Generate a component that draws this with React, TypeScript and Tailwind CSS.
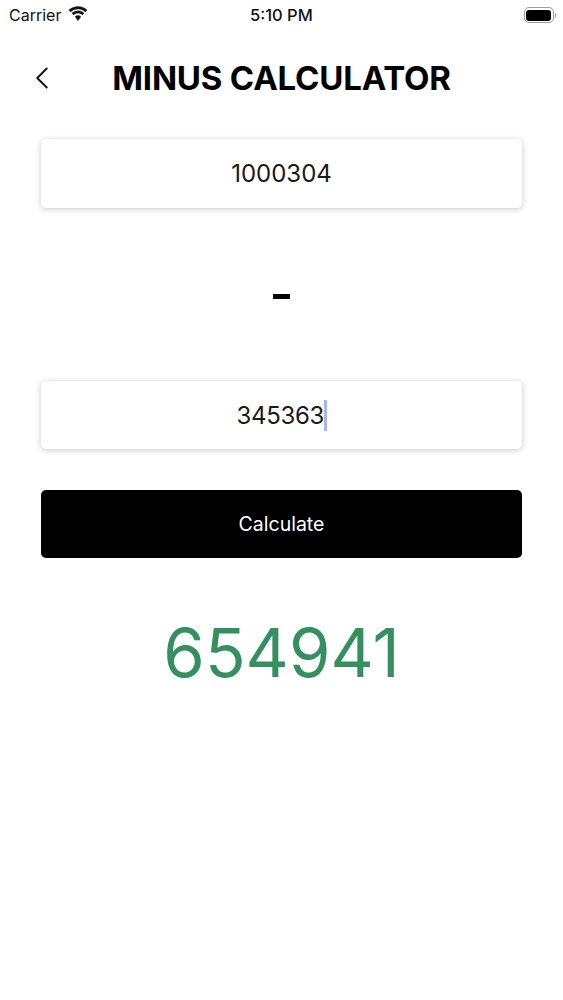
import { ChevronLeft } from "lucide-react";

function StatusBar() {
  return (
    <div className="relative flex h-[30px] items-center justify-between pl-[9px] pr-[7px] text-[16px] leading-none text-[#111]">
      <div className="flex items-center gap-[6px]">
        <span>Carrier</span>
        <svg width="22" height="16" viewBox="0 0 19 14" fill="#111" stroke="#111" strokeWidth="0.3" className="-mt-[3px]">
          <path d="M9.5 2.600c2.500 0 4.800 1 6.500 2.600l1.500-1.600C15.400 1.600 12.600.4 9.500.4S3.600 1.600 1.500 3.600L3 5.200C4.700 3.600 7 2.600 9.500 2.600z" />
          <path d="M9.500 6.300c1.500 0 2.900.6 3.900 1.500l1.500-1.600c-1.400-1.300-3.300-2.100-5.400-2.100s-4 .8-5.400 2.100l1.500 1.600c1-.9 2.400-1.500 3.900-1.500z" />
          <path d="M9.500 8.300c-1 0-1.900.4-2.500 1l2.500 3.700 2.500-3.700c-.6-.6-1.500-1-2.500-1z" />
        </svg>
      </div>
      <span className="absolute left-[250px] top-[7px] text-[16.500px] font-medium">5:10 PM</span>
      <div className="flex items-center gap-[1px]">
        <div className="flex h-[16px] w-[30px] items-center rounded-[5px] border border-[#9a9a9a] p-[1.500px]">
          <div className="h-full w-full rounded-[3px] bg-black" />
        </div>
        <div className="h-[5px] w-[1.500px] rounded-r-full bg-[#9a9a9a]" />
      </div>
    </div>
  );
}

export default function App() {
  return (
    <div className="min-h-[1000px] w-[563px] bg-white font-['Inter',sans-serif]">
      <StatusBar />

      <div className="relative mt-[26px] flex h-[44px] items-center justify-center">
        <ChevronLeft
          className="absolute left-[23px] top-[3px] text-[#111]"
          size={38}
          strokeWidth={1.200}
        />
        <h1 className="text-[33px] font-bold leading-none tracking-[-0.2px] text-black">
          MINUS CALCULATOR
        </h1>
      </div>

      <div className="mt-[39px] flex flex-col px-[41px]">
        <div className="flex h-[69px] items-center justify-center rounded-[5px] bg-white pt-[1px] text-[24px] text-[#1a1a1a] shadow-[0_1px_6px_rgba(0,0,0,0.22)]">
          1000304
        </div>

        <div className="flex h-[173px] items-center justify-center">
          <div className="mt-[4px] h-[5px] w-[17px] bg-black" />
        </div>

        <div className="flex h-[68px] items-center justify-center rounded-[5px] bg-white pt-[1px] text-[24px] tracking-[-0.3px] text-[#1a1a1a] shadow-[0_1px_6px_rgba(0,0,0,0.22)]">
          345363
          <span className="h-[31px] w-[2.500px] bg-[#aab4ea]" />
        </div>

        <button
          type="button"
          className="mt-[41px] flex h-[68px] items-center justify-center rounded-[5px] bg-black pt-[1px] text-[19.500px] text-white"
        >
          Calculate
        </button>

        <p className="mt-[56px] text-center text-[67px] leading-[77px] text-[#35905f]">654941</p>
      </div>
    </div>
  );
}
